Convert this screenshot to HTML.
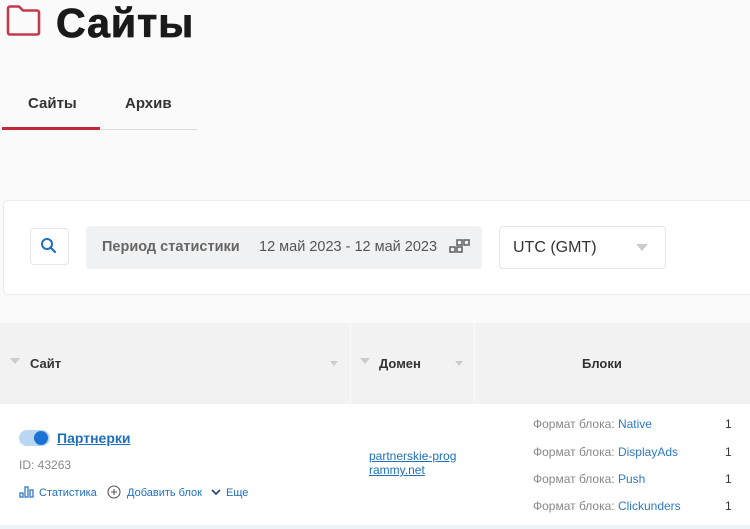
<!DOCTYPE html>
<html><head><meta charset="utf-8"><style>
*{margin:0;padding:0;box-sizing:border-box}
body{width:750px;height:529px;overflow:hidden;background:#fafafa;font-family:"Liberation Sans",sans-serif;position:relative}
.abs{position:absolute}
h1{position:absolute;left:56px;top:0px;font-size:41px;font-weight:bold;color:#1a1a1a;letter-spacing:1px;-webkit-text-stroke:0.8px #1a1a1a}
.tab{position:absolute;top:95px;font-size:15px;font-weight:bold;color:#333}
.card{position:absolute;left:3px;top:200px;width:760px;height:95px;background:#fff;border:1px solid #ececec;border-radius:5px}
.hdr{position:absolute;top:323px;height:81px;background:#f2f2f2}
.row{position:absolute;left:0;top:404px;width:750px;height:121px;background:#fff}
.lnk{color:#1e6fc0}
.fm{position:absolute;left:533px;font-size:12px;color:#888}
.fm span{color:#2f79c4}
.n{position:absolute;left:725px;font-size:12px;color:#333}
</style></head><body>
<svg class="abs" style="left:5px;top:4px" width="37" height="33" viewBox="0 0 37 33"><path d="M3 4.5 a2 2 0 0 1 2-2 h9 l4 4 h14 a2 2 0 0 1 2 2 v20 a2 2 0 0 1-2 2 h-27 a2 2 0 0 1-2-2z" fill="none" stroke="#c23a4f" stroke-width="2.6" stroke-linejoin="round"/></svg>
<h1>Сайты</h1>
<div class="tab" style="left:28px">Сайты</div>
<div class="tab" style="left:125px">Архив</div>
<div class="abs" style="left:2px;top:127px;width:98px;height:3px;background:#c0283c"></div>
<div class="abs" style="left:100px;top:129px;width:97px;height:1px;background:#ddd"></div>
<div class="card"></div>
<div class="abs" style="left:30px;top:228px;width:39px;height:37px;border:1px solid #e6e6e6;border-radius:4px;background:#fff"></div>
<svg class="abs" style="left:40px;top:237px" width="18" height="18" viewBox="0 0 18 18"><circle cx="7" cy="7" r="5" fill="none" stroke="#1e6fc0" stroke-width="2"/><path d="M10.5 10.5 L15 15" stroke="#1e6fc0" stroke-width="2.2" stroke-linecap="round"/></svg>
<div class="abs" style="left:86px;top:226px;width:396px;height:43px;background:#f0f1f2;border-radius:4px"></div>
<div class="abs" style="left:102px;top:239px;font-size:14.5px;font-weight:bold;color:#666">Период статистики</div>
<div class="abs" style="left:259px;top:239px;font-size:14.5px;color:#555">12 май 2023 - 12 май 2023</div>
<svg class="abs" style="left:449px;top:239px" width="22" height="18" viewBox="0 0 22 18"><g fill="none" stroke="#666" stroke-width="1.6"><rect x="1" y="8" width="5" height="5"/><rect x="8" y="8" width="5" height="5"/><rect x="8" y="1" width="5" height="5"/><rect x="15" y="1" width="5" height="5"/></g></svg>
<div class="abs" style="left:499px;top:226px;width:167px;height:43px;background:#fff;border:1px solid #e6e6e6;border-radius:4px"></div>
<div class="abs" style="left:513px;top:239px;font-size:16px;color:#333">UTC (GMT)</div>
<div class="abs" style="left:636px;top:244px;width:0;height:0;border-left:6px solid transparent;border-right:6px solid transparent;border-top:7px solid #ccc"></div>
<div class="hdr" style="left:0;width:350px"></div>
<div class="hdr" style="left:351px;width:123px"></div>
<div class="hdr" style="left:475px;width:275px"></div>
<div class="abs" style="left:10px;top:358px;width:0;border-left:5px solid transparent;border-right:5px solid transparent;border-top:6px solid #ccc"></div>
<div class="abs" style="left:30px;top:356px;font-size:13px;color:#333;font-weight:bold">Сайт</div>
<div class="abs" style="left:330px;top:361px;border-left:4px solid transparent;border-right:4px solid transparent;border-top:5px solid #ccc"></div>
<div class="abs" style="left:360px;top:358px;width:0;border-left:5px solid transparent;border-right:5px solid transparent;border-top:6px solid #ccc"></div>
<div class="abs" style="left:379px;top:356px;font-size:13px;color:#333;font-weight:bold">Домен</div>
<div class="abs" style="left:455px;top:361px;border-left:4px solid transparent;border-right:4px solid transparent;border-top:5px solid #ccc"></div>
<div class="abs" style="left:582px;top:356px;font-size:13px;color:#333;font-weight:bold">Блоки</div>
<div class="row"></div>
<div class="abs" style="left:19px;top:430px;width:31px;height:16px;border-radius:8px;background:#b9d7f3"></div>
<div class="abs" style="left:34px;top:431px;width:14px;height:14px;border-radius:50%;background:#1a73d4"></div>
<div class="abs lnk" style="left:57px;top:430px;font-size:14px;font-weight:bold;text-decoration:underline">Партнерки</div>
<div class="abs" style="left:19px;top:458px;font-size:12px;color:#888">ID: 43263</div>
<svg class="abs" style="left:19px;top:486px" width="16" height="12" viewBox="0 0 16 12"><g fill="none" stroke="#2f79c4" stroke-width="1.3"><rect x="1" y="7" width="3" height="4"/><rect x="6" y="1" width="3" height="10"/><rect x="11" y="4" width="3" height="7"/></g></svg>
<div class="abs lnk" style="left:39px;top:487px;font-size:11px">Статистика</div>
<svg class="abs" style="left:107px;top:485px" width="14" height="14" viewBox="0 0 14 14"><circle cx="7" cy="7" r="6" fill="none" stroke="#555" stroke-width="1.1"/><path d="M7 4v6M4 7h6" stroke="#555" stroke-width="1.1"/></svg>
<div class="abs lnk" style="left:127px;top:487px;font-size:11px">Добавить блок</div>
<svg class="abs" style="left:211px;top:488px" width="10" height="8" viewBox="0 0 10 8"><path d="M1 2l4 4 4-4" fill="none" stroke="#1e3f7a" stroke-width="1.6"/></svg>
<div class="abs lnk" style="left:226px;top:487px;font-size:11px">Еще</div>
<div class="abs lnk" style="left:369px;top:449px;font-size:12px;text-decoration:underline;line-height:14px;width:95px">partnerskie-prog<br>rammy.net</div>
<div class="fm" style="top:417px">Формат блока: <span>Native</span></div><div class="n" style="top:417px">1</div>
<div class="fm" style="top:445px">Формат блока: <span>DisplayAds</span></div><div class="n" style="top:445px">1</div>
<div class="fm" style="top:472px">Формат блока: <span>Push</span></div><div class="n" style="top:472px">1</div>
<div class="fm" style="top:499px">Формат блока: <span>Clickunders</span></div><div class="n" style="top:499px">1</div>
<div class="abs" style="left:0;top:525px;width:750px;height:4px;background:#edf3f9"></div>
</body></html>
